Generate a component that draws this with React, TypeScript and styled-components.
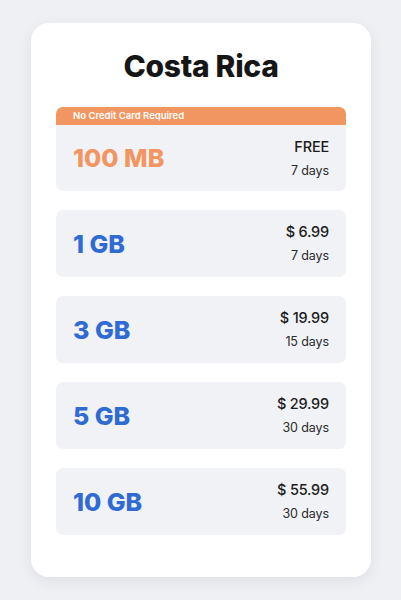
import styled, { createGlobalStyle } from 'styled-components';

const GlobalStyle = createGlobalStyle`
  html, body {
    margin: 0;
    padding: 0;
    background: #eff0f4;
  }
  body {
    font-family: Inter, 'Open Sans', sans-serif;
  }
`;

const Page = styled.div`
  width: 401px;
  height: 600px;
  box-sizing: border-box;
  padding: 23px 30px 23px 31px;
  background: #eff0f4;
`;

const Card = styled.div`
  height: 554px;
  box-sizing: border-box;
  background: #ffffff;
  border-radius: 18px;
  box-shadow: 0 4px 14px rgba(40, 44, 70, 0.08);
  padding: 28px 25px 0 25px;
  display: flex;
  flex-direction: column;
`;

const Title = styled.h1`
  margin: 0 0 26px 0;
  text-align: center;
  font-family: Inter, sans-serif;
  font-weight: 800;
  font-size: 30px;
  line-height: 30px;
  letter-spacing: -0.3px;
  color: #161616;
`;

const PlanList = styled.div`
  display: flex;
  flex-direction: column;
  gap: 19px;
`;

const PlanCard = styled.div`
  border-radius: 7px;
  overflow: hidden;
  background: #f1f2f6;
`;

const Banner = styled.div`
  height: 18px;
  background: #f19661;
  color: #ffffff;
  font-family: Inter, sans-serif;
  font-weight: 600;
  font-size: 9.5px;
  line-height: 18px;
  padding-left: 17px;
`;

const PlanRow = styled.div<{ $tall?: boolean }>`
  height: ${({ $tall }) => ($tall ? 66 : 67)}px;
  box-sizing: border-box;
  padding: 0 17px;
  display: flex;
  align-items: center;
  justify-content: space-between;
`;

const DataAmount = styled.span<{ $accent: string }>`
  font-family: Inter, sans-serif;
  font-weight: 800;
  font-size: 25px;
  color: ${({ $accent }) => $accent};
`;

const PriceStack = styled.div`
  display: flex;
  flex-direction: column;
  align-items: flex-end;
  gap: 7px;
`;

const Price = styled.span`
  font-family: Inter, sans-serif;
  font-weight: 500;
  font-size: 14.5px;
  line-height: 18px;
  letter-spacing: -0.2px;
  color: #1c1c1c;
`;

const Duration = styled.span`
  font-family: Inter, sans-serif;
  font-weight: 400;
  font-size: 12.5px;
  line-height: 16px;
  letter-spacing: -0.1px;
  color: #2a2a2a;
`;

type Plan = {
  amount: string;
  price: string;
  days: string;
  free?: boolean;
};

const plans: Plan[] = [
  { amount: '100 MB', price: 'FREE', days: '7 days', free: true },
  { amount: '1 GB', price: '$ 6.99', days: '7 days' },
  { amount: '3 GB', price: '$ 19.99', days: '15 days' },
  { amount: '5 GB', price: '$ 29.99', days: '30 days' },
  { amount: '10 GB', price: '$ 55.99', days: '30 days' },
];

function App() {
  return (
    <Page>
      <GlobalStyle />
      <Card>
        <Title>Costa Rica</Title>
        <PlanList>
          {plans.map((plan) => (
            <PlanCard key={plan.amount}>
              {plan.free && <Banner>No Credit Card Required</Banner>}
              <PlanRow $tall={plan.free}>
                <DataAmount $accent={plan.free ? '#f19661' : '#2f6bd3'}>
                  {plan.amount}
                </DataAmount>
                <PriceStack>
                  <Price>{plan.price}</Price>
                  <Duration>{plan.days}</Duration>
                </PriceStack>
              </PlanRow>
            </PlanCard>
          ))}
        </PlanList>
      </Card>
    </Page>
  );
}

export default App;
